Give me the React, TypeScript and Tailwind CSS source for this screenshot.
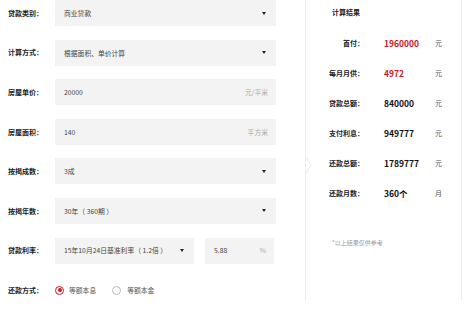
import React from "react";

const font = { fontFamily: '"Noto Sans CJK SC", "Noto Sans", sans-serif' };

function Arrow() {
  return (
    <svg width="4" height="3" viewBox="0 0 4 3" className="shrink-0">
      <path d="M0 0 L4 0 L2 3 Z" fill="#222" />
    </svg>
  );
}

function Row({ label, children }: { label: string; children: React.ReactNode }) {
  return (
    <div className="flex items-center h-[26px]">
      <div className="w-[47px] text-[7px] font-bold text-[#222]">{label}</div>
      {children}
    </div>
  );
}

function SelectBox({ text, w = "w-[221px]" }: { text: string; w?: string }) {
  return (
    <div className={`${w} h-[26px] bg-[#f3f3f3] flex items-center justify-between pl-[9px] pr-[10px]`}>
      <span className="text-[6.8px] text-[#444]">{text}</span>
      <Arrow />
    </div>
  );
}

function InputBox({ text, unit, w = "w-[221px]" }: { text: string; unit: string; w?: string }) {
  return (
    <div className={`${w} h-[26px] bg-[#f3f3f3] flex items-center justify-between pl-[9px] pr-[8px]`}>
      <span className="text-[6.8px] text-[#444]">{text}</span>
      <span className="text-[6.8px] text-[#aaa]">{unit}</span>
    </div>
  );
}

function Result({ label, value, unit, red }: { label: string; value: string; unit: string; red?: boolean }) {
  return (
    <div className="flex items-center h-[30px]">
      <div className="w-[58px] text-right text-[7px] font-bold text-[#222]">{label}</div>
      <div className={`ml-[20px] w-[51px] text-[8.5px] font-bold ${red ? "text-[#d2161e]" : "text-[#111]"}`}>{value}</div>
      <div className="text-[7px] text-[#555]">{unit}</div>
    </div>
  );
}

export default function App() {
  return (
    <div className="w-[465px] h-[310px] bg-white flex overflow-hidden" style={font}>
      <div className="w-[305px] pl-[8px] flex flex-col gap-[13.6px]">
        <Row label="贷款类别：">
          <SelectBox text="商业贷款" />
        </Row>
        <Row label="计算方式：">
          <SelectBox text="根据面积、单价计算" />
        </Row>
        <Row label="房屋单价：">
          <InputBox text="20000" unit="元/平米" />
        </Row>
        <Row label="房屋面积：">
          <InputBox text="140" unit="平方米" />
        </Row>
        <Row label="按揭成数：">
          <SelectBox text="3成" />
        </Row>
        <Row label="按揭年数：">
          <SelectBox text="30年（ 360期 ）" />
        </Row>
        <Row label="贷款利率：">
          <div className="flex gap-[11px]">
            <SelectBox text="15年10月24日基准利率（ 1.2倍 ）" w="w-[139px]" />
            <InputBox text="5.88" unit="%" w="w-[69px]" />
          </div>
        </Row>
        <div className="flex items-center h-[14px] mt-[6px]">
          <div className="w-[47px] text-[7px] font-bold text-[#222]">还款方式：</div>
          <div className="flex items-center">
            <span className="w-[9px] h-[9px] rounded-full border border-[#d2161e] flex items-center justify-center">
              <span className="w-[4px] h-[4px] rounded-full bg-[#d2161e]" />
            </span>
            <span className="ml-[5px] text-[6.8px] text-[#555]">等额本息</span>
            <span className="ml-[16px] w-[9px] h-[9px] rounded-full border border-[#bbb]" />
            <span className="ml-[6px] text-[6.8px] text-[#555]">等额本金</span>
          </div>
        </div>
      </div>
      <div className="relative w-[157px] h-[300px] border-l border-r border-[#ececec]">
        <svg className="absolute left-[-1px] top-[157px]" width="7" height="16" viewBox="0 0 7 16">
          <path d="M1 0 L6 8 L1 16" fill="none" stroke="#e6e6e6" strokeWidth="1" />
        </svg>
        <div className="pl-[26px] pt-[7px] text-[7px] font-bold text-[#222] h-[28px]">计算结果</div>
        <Result label="首付：" value="1960000" unit="元" red />
        <Result label="每月月供：" value="4972" unit="元" red />
        <Result label="贷款总额：" value="840000" unit="元" />
        <Result label="支付利息：" value="949777" unit="元" />
        <Result label="还款总额：" value="1789777" unit="元" />
        <Result label="还款月数：" value="360个" unit="月" />
        <div className="pl-[26px] mt-[30px] text-[6px] text-[#999]">*以上结果仅供参考</div>
      </div>
    </div>
  );
}
